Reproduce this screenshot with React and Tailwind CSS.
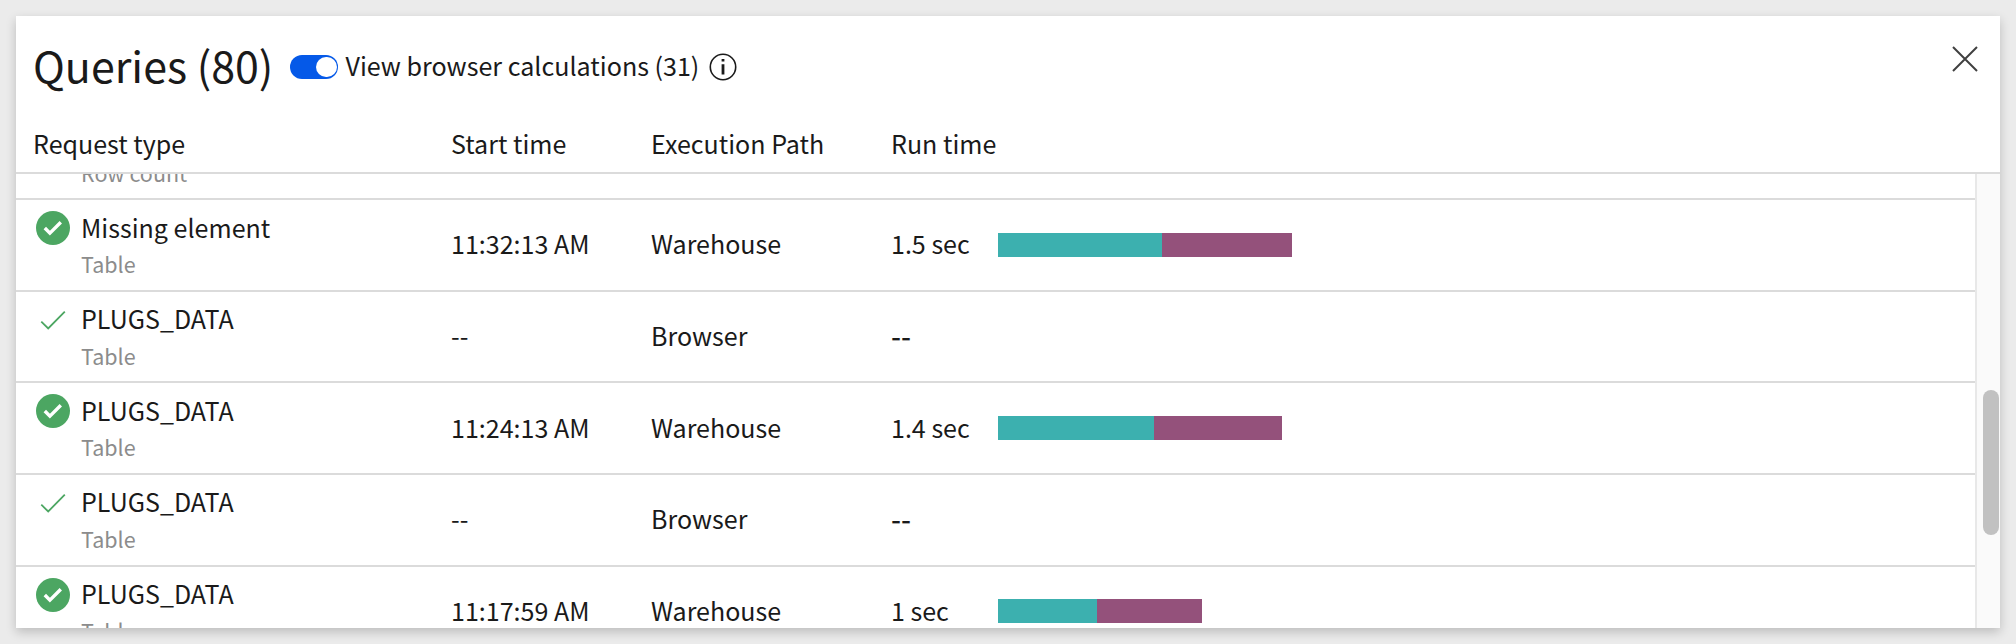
const rows = [
  { id: 0, name: "", kind: "Row count", filled: true, start: "", path: "", run: "", height: "h-[92px]", namePad: "h-[51px] pt-[11px]", cellPad: "pb-[3px]", barPad: "pt-[33px]" },
  { id: 1, name: "Missing element", kind: "Table", filled: true, start: "11:32:13 AM", path: "Warehouse", run: "1.5 sec", bars: [164, 130], height: "h-[92px]", namePad: "h-[50px] pt-[11px]", cellPad: "pb-[5px]", barPad: "pt-[33px]" },
  { id: 2, name: "PLUGS_DATA", kind: "Table", filled: false, start: "--", path: "Browser", run: "--", height: "h-[91px]", namePad: "h-[50px] pt-2.5", cellPad: "pb-[3px]", barPad: "pt-[33px]" },
  { id: 3, name: "PLUGS_DATA", kind: "Table", filled: true, start: "11:24:13 AM", path: "Warehouse", run: "1.4 sec", bars: [156, 128], height: "h-[92px]", namePad: "h-[50px] pt-[11px]", cellPad: "pb-[3px]", barPad: "pt-[33px]" },
  { id: 4, name: "PLUGS_DATA", kind: "Table", filled: false, start: "--", path: "Browser", run: "--", height: "h-[92px]", namePad: "h-[50px] pt-2.5", cellPad: "pb-[4px]", barPad: "pt-[33px]" },
  { id: 5, name: "PLUGS_DATA", kind: "Table", filled: true, start: "11:17:59 AM", path: "Warehouse", run: "1 sec", bars: [99, 105], height: "h-[91px]", namePad: "h-[50px] pt-2.5", cellPad: "pb-[3px]", barPad: "pt-8" },
];

function StatusIcon({ filled }) {
  return filled ? (
    <svg className="block size-[34px]" viewBox="0 0 34 34" fill="none">
      <circle cx="17" cy="17" r="17" fill="#4ca662" />
      <path d="M8.8 17l5.1 5.2L24.8 11.3" stroke="#fff" strokeWidth="3.4" />
    </svg>
  ) : (
    <svg className="block size-[34px]" viewBox="0 0 34 34" fill="none">
      <path d="M5.3 18.7l6.9 6.8L28.8 8.7" stroke="#4ca662" strokeWidth="1.8" />
    </svg>
  );
}

function Row({ row }) {
  const cell = `flex shrink-0 items-center ${row.cellPad}`;
  return (
    <div className={`flex shrink-0 border-b-2 border-[#dbdbdb] text-[25.05px] leading-8 ${row.height}`}>
      <div className="flex w-[435px] shrink-0 pl-5">
        <div className="w-[45px] shrink-0 pt-[11px]">
          <StatusIcon filled={row.filled} />
        </div>
        <div>
          <div className={row.namePad}>{row.name}</div>
          <div className="text-[21.5px] leading-7 text-[#8c8c8c]">{row.kind}</div>
        </div>
      </div>
      <div className={`w-[200px] ${cell}`}>{row.start}</div>
      <div className={`w-[240px] ${cell}`}>{row.path}</div>
      <div className={`w-[107px] ${cell}`}>
        <span className={row.bars ? "" : "text-[28px] font-medium"}>{row.run}</span>
      </div>
      {row.bars && (
        <div className={`flex ${row.barPad}`}>
          <div className="h-6 bg-[#3cb0af]" style={{ width: row.bars[0] }} />
          <div className="h-6 bg-[#94517b]" style={{ width: row.bars[1] }} />
        </div>
      )}
    </div>
  );
}

export default function App() {
  return (
    <div className="h-[644px] w-[2016px] overflow-hidden bg-[#ebebeb] p-4 font-['Noto_Sans_CJK_SC',sans-serif] whitespace-nowrap text-[#1a1a1a]">
      <div className="flex h-[612px] flex-col bg-white shadow-[0_4px_10px_rgba(0,0,0,0.2)]">
        <div className="flex h-[102px] shrink-0 justify-between pr-[22px] pl-[17px]">
          <div className="flex items-center">
            <h1 className="w-[257px] shrink-0 pb-[7px] text-[42.95px] leading-[52px]">Queries (80)</h1>
            <div className="flex h-6 w-12 shrink-0 items-center justify-end rounded-full bg-[#0559e8] pr-[1.5px]">
              <div className="size-[20.5px] rounded-full bg-white" />
            </div>
            <span className="w-[371px] shrink-0 pb-[4px] pl-[7.5px] text-[25.08px] leading-8">View browser calculations (31)</span>
            <svg className="size-7 shrink-0" viewBox="0 0 28 28" fill="none">
              <circle cx="14" cy="14" r="12.7" stroke="#1a1a1a" strokeWidth="1.6" />
              <path d="M14 6v2.6M14 11.3v10.2" stroke="#1a1a1a" strokeWidth="2.8" />
            </svg>
          </div>
          <svg className="mt-[30px] size-[26px]" viewBox="0 0 26 26" fill="none">
            <path d="M1 1l24 24M25 1L1 25" stroke="#404040" strokeWidth="2" />
          </svg>
        </div>
        <div className="flex h-14 shrink-0 items-center border-b-2 border-[#dbdbdb] pb-[5px] pl-[17px] text-[25.05px] leading-8">
          <div className="w-[418px]">Request type</div>
          <div className="w-[200px]">Start time</div>
          <div className="w-[240px]">Execution Path</div>
          <div>Run time</div>
        </div>
        <div className="flex min-h-0 flex-1">
          <div className="flex w-[1959px] shrink-0 flex-col justify-start overflow-hidden">
            <div className="-mt-[66px] flex flex-col">
              {rows.map((row) => (
                <Row key={row.id} row={row} />
              ))}
            </div>
          </div>
          <div className="flex-1 border-l-2 border-[#e8e8e8] bg-[#fafafa] pt-[216px] pl-1.5">
            <div className="h-[145px] w-4 rounded-full bg-[#c1c1c1]" />
          </div>
        </div>
      </div>
    </div>
  );
}
